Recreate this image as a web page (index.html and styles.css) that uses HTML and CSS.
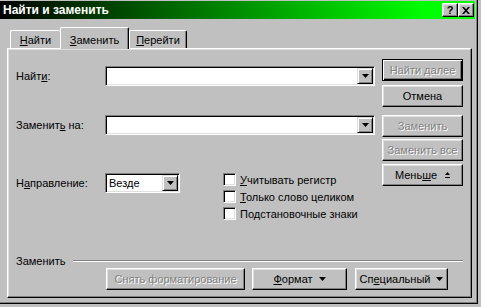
FILE: index.html
```html
<!DOCTYPE html>
<html lang="ru">
<head>
    <meta charset="UTF-8">
    <title>Найти и заменить</title>
    <link rel="stylesheet" href="styles.css">
</head>
<body>
<div class="window">
    <div class="titlebar">
        <span class="title">Найти и заменить</span>
        <div class="caps">
            <span class="cap cap-help">?</span>
            <span class="cap"><svg width="8" height="7" viewBox="0 0 8 7"><path d="M0 0h2l2 2.2L6 0h2L5 3.5 8 7H6L4 4.8 2 7H0l3-3.5z"/></svg></span>
        </div>
    </div>

    <div class="tabs">
        <div class="tab tab-find"><u>Н</u>айти</div>
        <div class="tab tab-active"><u>З</u>аменить</div>
        <div class="tab tab-go"><u>П</u>ерейти</div>
    </div>

    <div class="panel">
        <div class="main">
            <div class="form">
                <div class="row row-find">
                    <span class="lbl">Найт<u>и</u>:</span>
                    <div class="combo"><span class="drop"><svg width="7" height="4"><path d="M0 0h7L3.5 4z"/></svg></span></div>
                </div>
                <div class="row row-repl">
                    <span class="lbl">Заменит<u>ь</u> на:</span>
                    <div class="combo"><span class="drop"><svg width="7" height="4"><path d="M0 0h7L3.5 4z"/></svg></span></div>
                </div>
                <div class="row row-dir">
                    <span class="lbl lbl-dir">Н<u>а</u>правление:</span>
                    <div class="combo select"><span class="sel-text">Везде</span><span class="drop"><svg width="7" height="4"><path d="M0 0h7L3.5 4z"/></svg></span></div>
                    <div class="checks">
                        <div class="check"><span class="box"></span><span><u>У</u>читывать регистр</span></div>
                        <div class="check"><span class="box"></span><span><u>Т</u>олько слово целиком</span></div>
                        <div class="check"><span class="box"></span><span>По<u>д</u>становочные знаки</span></div>
                    </div>
                </div>
            </div>
            <div class="buttons">
                <div class="btn btn-default disabled">Найти далее</div>
                <div class="btn btn-cancel">Отмена</div>
                <div class="btn btn-repl disabled">Заменить</div>
                <div class="btn btn-all disabled">Заменить все</div>
                <div class="btn btn-less">Мень<u>ш</u>е <svg class="less-ico" width="5" height="6"><path d="M2.5 0L5 3H0z M0 5h5v1H0z"/></svg></div>
            </div>
        </div>

        <div class="group">
            <div class="group-head"><span>Заменить</span><span class="group-line"></span></div>
            <div class="group-btns">
                <div class="btn btn-clear disabled">Снять форматирование</div>
                <div class="btn btn-format"><u>Ф</u>ормат <svg class="arr" width="7" height="4"><path d="M0 0h7L3.5 4z"/></svg></div>
                <div class="btn btn-special">Сп<u>е</u>циальный <svg class="arr" width="7" height="4"><path d="M0 0h7L3.5 4z"/></svg></div>
            </div>
        </div>
    </div>
</div>
</body>
</html>
```

FILE: styles.css
```css
body{margin:0;background:#c0c0c0;font:11px "Liberation Sans",Arial,sans-serif;color:#000;}
u{text-decoration:underline;text-underline-offset:1px;}

.window{box-sizing:border-box;width:478px;height:304px;padding:1px 2px 0 0;border-right:1px solid #000;border-bottom:1px solid #000;box-shadow:inset -1px -1px #808080;}

.titlebar{height:18px;display:flex;align-items:center;justify-content:space-between;padding:0 1px 0 3px;background:linear-gradient(to right,#000,#00ff00 90%);}
.title{color:#fff;font-weight:bold;font-size:12px;}
.caps{display:flex;}
.cap{box-sizing:border-box;width:16px;height:14px;background:#c0c0c0;display:flex;align-items:center;justify-content:center;border-top:1px solid #fff;border-left:1px solid #fff;border-right:1px solid #000;border-bottom:1px solid #000;box-shadow:inset -1px -1px #808080,inset 1px 1px #dfdfdf;}
.cap-help{font-weight:bold;font-size:11px;line-height:1;}

.tabs{display:flex;align-items:flex-end;height:21px;margin-top:8px;padding-left:10px;}
.tab{box-sizing:border-box;height:18px;display:flex;align-items:center;justify-content:center;border-top:1px solid #fff;border-left:1px solid #fff;border-right:1px solid #000;box-shadow:inset -1px 0 #808080;border-radius:2px 2px 0 0;padding-top:1px;}
.tab-find{width:50px;border-right:none;box-shadow:none;}
.tab-active{width:69px;height:22px;margin-bottom:-1px;padding-top:3px;background:#c0c0c0;position:relative;z-index:1;}
.tab-go{width:58px;}

.panel{box-sizing:border-box;width:465px;height:250px;margin-left:7px;border-top:1px solid #fff;border-left:1px solid #fff;border-right:1px solid #000;border-bottom:1px solid #000;box-shadow:inset -1px -1px #808080,inset 1px 1px #dfdfdf;padding:10px 0 7px 8px;display:flex;flex-direction:column;}

.main{display:flex;gap:7px;}
.form{width:359px;}
.row{display:flex;align-items:center;}
.row-find{margin-top:7px;}
.row-repl{margin-top:29px;}
.row-dir{margin-top:38px;align-items:flex-start;}
.lbl{width:89px;}
.lbl-dir{line-height:20px;}

.combo{box-sizing:border-box;width:270px;height:20px;padding:1px;background:#fff;display:flex;justify-content:flex-end;align-items:center;border-top:1px solid #808080;border-left:1px solid #808080;border-right:1px solid #fff;border-bottom:1px solid #fff;box-shadow:inset 1px 1px #000,inset -1px -1px #dfdfdf;}
.select{width:75px;justify-content:space-between;}
.sel-text{padding-left:2px;}
.drop{box-sizing:border-box;width:16px;height:16px;background:#c0c0c0;display:flex;align-items:center;justify-content:center;border-top:1px solid #dfdfdf;border-left:1px solid #dfdfdf;border-right:1px solid #000;border-bottom:1px solid #000;box-shadow:inset 1px 1px #fff,inset -1px -1px #808080;}

.checks{margin-left:43px;display:flex;flex-direction:column;gap:4px;}
.check{display:flex;align-items:center;height:13px;}
.box{box-sizing:border-box;width:13px;height:13px;margin-right:4px;background:#fff;border-top:1px solid #808080;border-left:1px solid #808080;border-right:1px solid #fff;border-bottom:1px solid #fff;box-shadow:inset 1px 1px #000,inset -1px -1px #dfdfdf;}

.buttons{width:81px;display:flex;flex-direction:column;}
.btn{box-sizing:border-box;width:81px;height:22px;display:flex;align-items:center;justify-content:center;border-top:1px solid #fff;border-left:1px solid #fff;border-right:1px solid #000;border-bottom:1px solid #000;box-shadow:inset -1px -1px #808080,inset 1px 1px #dfdfdf;white-space:nowrap;}
.btn-default{border:1px solid #000;box-shadow:inset 1px 1px #fff,inset -1px -1px #000,inset -2px -2px #808080;}
.btn-cancel{margin-top:4px;}
.btn-repl{margin-top:8px;}
.btn-all{margin-top:2px;}
.btn-less{margin-top:3px;}
.less-ico{margin-left:8px;}
.disabled{color:#808080;text-shadow:1px 1px 0 #fff;}

.group{margin-top:auto;}
.group-head{display:flex;align-items:center;height:14px;width:447px;}
.group-line{flex:1;margin-left:8px;border-top:1px solid #808080;border-bottom:1px solid #fff;}
.group-btns{display:flex;margin-left:90px;}
.btn-clear{width:139px;}
.btn-format{width:95px;margin-left:7px;}
.btn-special{width:93px;margin-left:8px;}
.arr{margin-left:6px;}
```
